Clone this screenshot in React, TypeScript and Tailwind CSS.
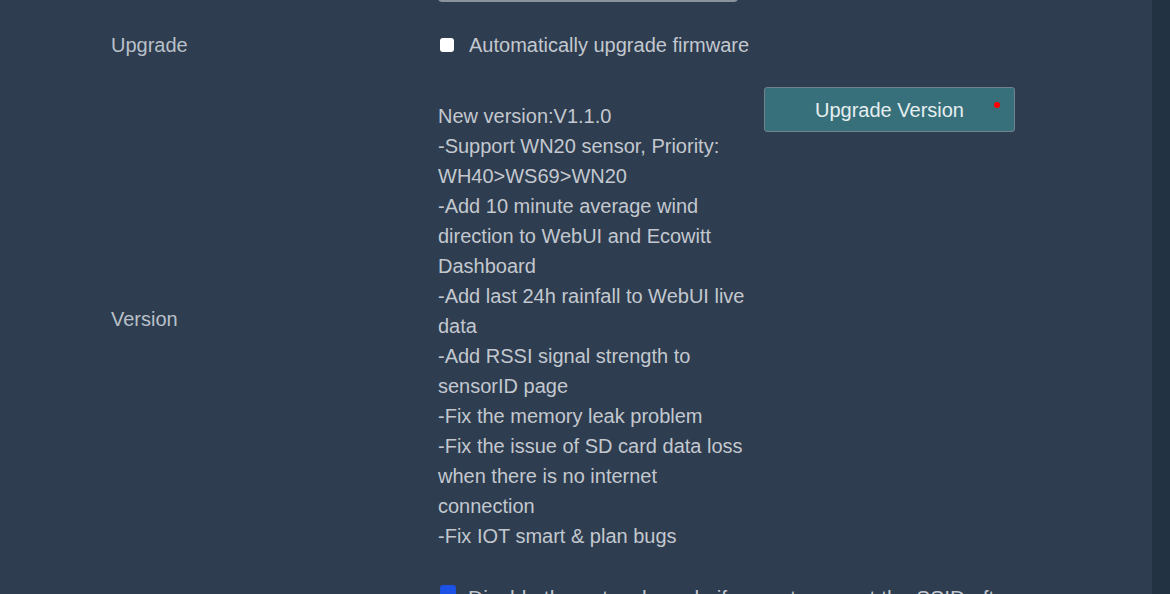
import React from 'react';

const notes = [
  'New version:V1.1.0',
  '-Support WN20 sensor, Priority: WH40>WS69>WN20',
  '-Add 10 minute average wind direction to WebUI and Ecowitt Dashboard',
  '-Add last 24h rainfall to WebUI live data',
  '-Add RSSI signal strength to sensorID page',
  '-Fix the memory leak problem',
  '-Fix the issue of SD card data loss when there is no internet connection',
  '-Fix IOT smart & plan bugs',
];

export default function App() {
  return (
    <div className="flex h-[594px] w-[1170px] overflow-hidden bg-[#2e3d4f] font-['Liberation_Sans',Arial,sans-serif] text-[20px] text-[#c3c8cf]">
      <div className="flex-1 overflow-hidden">
        {/* input from the previous row, scrolled mostly out of view */}
        <div className="ml-[438px] -mt-[38px] h-[40px] w-[300px] rounded-[4px] border-2 border-[#8a929b] bg-[#2e3d4f]" />

        {/* Upgrade */}
        <div className="mt-[28px] flex h-[30px] items-center">
          <div className="w-[438px] shrink-0 pl-[111px] text-[#b9c0c9]">Upgrade</div>
          <label className="flex items-center gap-[15px]">
            <span className="ml-[2px] h-[14px] w-[14px] rounded-[3px] bg-white" />
            <span>Automatically upgrade firmware</span>
          </label>
        </div>

        {/* Version */}
        <div className="mt-[27px] flex items-center">
          <div className="w-[438px] shrink-0 pl-[111px] text-[#b9c0c9]">Version</div>
          <div className="flex items-start">
            <div className="w-[320px] pt-[14px] leading-[30px]">
              {notes.map((n, i) => (
                <div key={i}>{n}</div>
              ))}
            </div>
            <button className="relative ml-[6px] flex h-[45px] w-[251px] items-center justify-center rounded-[3px] border border-[#71818d] bg-[#37707a] text-[#e6eef0]">
              Upgrade Version
              <span className="absolute right-[14px] top-[14px] h-[6px] w-[6px] rounded-full bg-[#ff0000]" />
            </button>
          </div>
        </div>

        {/* next row, mostly below the fold */}
        <div className="mt-[33px] flex items-start">
          <div className="w-[438px] shrink-0" />
          <label className="flex items-start gap-[12px]">
            <span className="ml-[2px] mt-[1px] h-[16px] w-[16px] rounded-[3px] bg-[#1d52e6]" />
            <span className="text-[21px] leading-[28px]">Disable the network mode if cannot connect the SSID after</span>
          </label>
        </div>
      </div>
      <div className="w-[18px] bg-[#223243]" />
    </div>
  );
}
